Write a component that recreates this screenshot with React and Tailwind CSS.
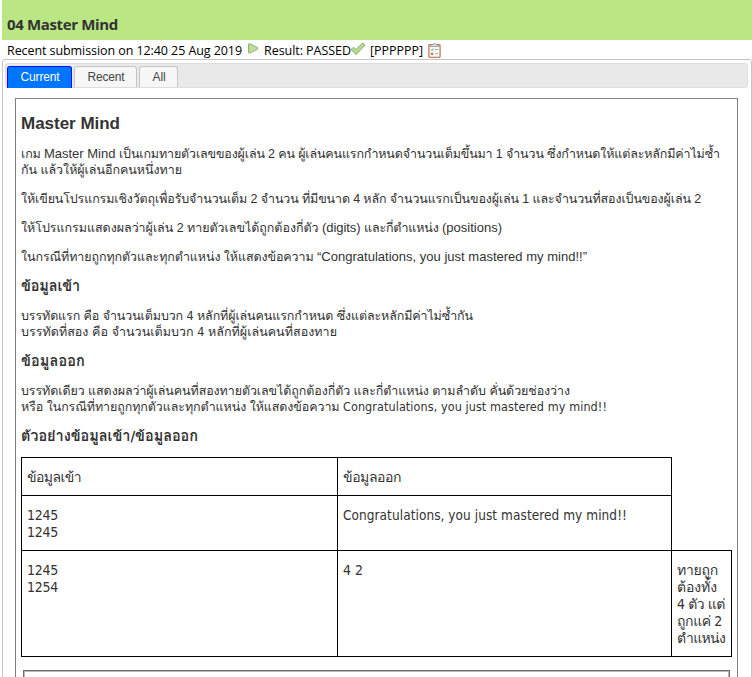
import { useLayoutEffect, useRef, useState } from "react";

const arial = "font-['Liberation_Sans','Loma','Noto_Sans_Thai',sans-serif]";
const tahoma = "font-['DejaVu_Sans_Condensed','Noto_Sans','Loma','Noto_Sans_Thai',sans-serif]";
const trebuchet = "font-['Open_Sans',sans-serif]";

// A run of text whose tracking is adjusted so that it spans `w` pixels.
function Run({ w, className = "", children }) {
  const ref = useRef(null);
  const [tracking, setTracking] = useState(0);
  useLayoutEffect(() => {
    const fit = () => {
      const el = ref.current;
      el.style.letterSpacing = "0px";
      const base = el.getBoundingClientRect().width;
      el.style.letterSpacing = "1px";
      const units = el.getBoundingClientRect().width - base;
      const t = units > 0 ? (w - base) / units : 0;
      el.style.letterSpacing = t + "px";
      setTracking(t);
    };
    fit();
    document.fonts.ready.then(fit);
  }, [w]);
  return (
    <span ref={ref} className={`inline-block whitespace-pre ${className}`} style={{ letterSpacing: tracking }}>
      {children}
    </span>
  );
}

function Line({ runs, className = "h-4 leading-4" }) {
  return (
    <div className={`flex whitespace-pre ${className}`}>
      {runs.map(([text, w, cls], i) => (
        <Run key={i} w={w} className={cls}>{text}</Run>
      ))}
    </div>
  );
}

function PlayIcon() {
  return (
    <svg width="12" height="12" viewBox="0 0 12 12">
      <path d="M1.5 1 L3 .8 L10.5 4.6 L10.5 6.2 L3 10 L1.5 9.8 Z" fill="#c0dd9c" stroke="#8fb070" strokeLinejoin="round" />
    </svg>
  );
}

function CheckIcon() {
  return (
    <svg width="16" height="16" viewBox="0 0 16 16">
      <path d="M1 7.5 L3.5 5.4 L6 7.6 L12.6 1 L15 3 L6.2 12.6 Z" fill="#b9db94" stroke="#86a966" strokeLinejoin="round" />
    </svg>
  );
}

function ClipboardIcon() {
  return (
    <svg width="13" height="15" viewBox="0 0 14 16">
      <rect x="1" y="2" width="12" height="13.2" rx=".5" fill="#fff" stroke="#b8653f" strokeWidth="1.2" />
      <path d="M2.5 3.8 V1.8 H5 Q5 .6 7 .6 Q9 .6 9 1.8 H11.5 V3.8 Z" fill="#ddd" stroke="#858585" strokeWidth=".8" />
      <path d="M3 7 L4.2 8.2 L6 5.7" fill="none" stroke="#5d9b45" />
      <path d="M3 10.3 L5.6 12.9 M5.6 10.3 L3 12.9" stroke="#d0402a" />
      <path d="M7.5 7 H11 M7.5 11.5 H11" stroke="#999" />
    </svg>
  );
}

const cell = "border border-black px-[5px] pt-[11px] align-top";
const latin = "text-[13px]";

export default function App() {
  return (
    <div className={`h-[677px] w-[752px] overflow-hidden bg-white text-[#333] ${arial}`}>
      <header className={`ml-0.5 h-10 bg-[#bbe684] pl-[5px] pt-[13px] text-[15px] font-bold leading-[22px] text-[#333] ${trebuchet}`}>
        <Line className="h-[22px]" runs={[["04 Master Mind", 111]]} />
      </header>

      <div className={`flex h-[19px] whitespace-pre pl-[7px] pt-[2px] text-[12.5px] leading-[18px] text-black ${trebuchet}`}>
        <Run w={235}>Recent submission on 12:40 25 Aug 2019</Run>
        <span className="ml-[5px] pt-[1px]"><PlayIcon /></span>
        <Run w={87} className="ml-[5px]">Result: PASSED</Run>
        <span className="-ml-px"><CheckIcon /></span>
        <Run w={53} className="ml-[4px]">[PPPPPP]</Run>
        <span className="ml-[5px] pt-[1px]"><ClipboardIcon /></span>
      </div>

      <main className="ml-0.5 h-[640px] w-[750px] rounded-[3px] border border-[#c5c5c5] px-0.5 pt-[3px]">
        <nav className="flex h-[25px] w-[743px] gap-0.5 rounded-[3px] border border-[#ddd] bg-[#e9e9e9] pl-px pt-0.5 text-xs">
          <span className="flex h-[22px] w-[65px] justify-center rounded-t-[3px] border border-b-0 border-[#0010ff] bg-[#0075ff] pl-px leading-5 text-white"><Run w={39}>Current</Run></span>
          <span className="flex h-[21px] w-[63px] justify-center rounded-t-[3px] border border-b-0 border-[#c5c5c5] bg-[#f6f6f6] pl-px leading-5 text-[#454545]"><Run w={37}>Recent</Run></span>
          <span className="flex h-[21px] w-[39px] justify-center rounded-t-[3px] border border-b-0 border-[#c5c5c5] bg-[#f6f6f6] pl-px leading-5 text-[#454545]"><Run w={13}>All</Run></span>
        </nav>

        <article className="ml-2.5 mt-2.5 h-[600px] w-[723px] border border-[#808080] pl-[5px] pt-[15px] text-[12.5px]">
          <h1 className="text-[17px] font-bold"><Line className="h-5 leading-5" runs={[["Master Mind", 99]]} /></h1>

          <div className="mt-3">
            <Line runs={[["เกม ", 23], ["Master Mind ", 75, latin], ["เป็นเกมทายตัวเลขของผู้เล่น 2 คน ผู้เล่นคนแรกกำหนดจำนวนเต็มขึ้นมา 1 จำนวน ซึ่งกำหนดให้แต่ละหลักมีค่าไม่ซ้ำ", 601]]} />
            <Line runs={[["กัน แล้วให้ผู้เล่นอีกคนหนึ่งทาย", 161]]} />
          </div>
          <div className="mt-[13px]">
            <Line runs={[["ให้เขียนโปรแกรมเชิงวัตถุเพื่อรับจำนวนเต็ม 2 จำนวน ที่มีขนาด 4 หลัก จำนวนแรกเป็นของผู้เล่น 1 และจำนวนที่สองเป็นของผู้เล่น 2", 680]]} />
          </div>
          <div className="mt-[13px]">
            <Line runs={[["ให้โปรแกรมแสดงผลว่าผู้เล่น 2 ทายตัวเลขได้ถูกต้องกี่ตัว ", 301], ["(digits) ", 42, latin], ["และกี่ตำแหน่ง ", 78], ["(positions)", 60, latin]]} />
          </div>
          <div className="mt-[13px]">
            <Line runs={[["ในกรณีที่ทายถูกทุกตัวและทุกตำแหน่ง ให้แสดงข้อความ ", 296], ["“Congratulations, you just mastered my mind!!”", 270, latin]]} />
          </div>

          <h2 className={`mt-[13px] text-[14.5px] font-bold ${tahoma}`}><Line runs={[["ข้อมูลเข้า", 59]]} /></h2>
          <div className={`mt-[14px] ${tahoma}`}>
            <Line runs={[["บรรทัดแรก คือ จำนวนเต็มบวก 4 หลักที่ผู้เล่นคนแรกกำหนด ซึ่งแต่ละหลักมีค่าไม่ซ้ำกัน", 452]]} />
            <Line runs={[["บรรทัดที่สอง คือ จำนวนเต็มบวก 4 หลักที่ผู้เล่นคนที่สองทาย", 316]]} />
          </div>

          <h2 className={`mt-[13px] text-[14.5px] font-bold ${tahoma}`}><Line runs={[["ข้อมูลออก", 64]]} /></h2>
          <div className={`mt-[14px] ${tahoma}`}>
            <Line runs={[["บรรทัดเดียว แสดงผลว่าผู้เล่นคนที่สองทายตัวเลขได้ถูกต้องกี่ตัว และกี่ตำแหน่ง ตามลำดับ คั่นด้วยช่องว่าง", 549]]} />
            <Line runs={[["หรือ ในกรณีที่ทายถูกทุกตัวและทุกตำแหน่ง ให้แสดงข้อความ ", 322], ["Congratulations, you just mastered my mind!!", 264]]} />
          </div>

          <h2 className={`mt-[13px] text-[14.5px] font-bold ${tahoma}`}><Line runs={[["ตัวอย่างข้อมูลเข้า/ข้อมูลออก", 177]]} /></h2>

          <table className={`mt-[13px] w-[711px] table-fixed border-collapse text-sm leading-[17px] ${tahoma}`}>
            <colgroup><col className="w-[316px]" /><col className="w-[334px]" /><col className="w-[60px]" /></colgroup>
            <tbody>
              <tr className="h-[38px]">
                <td className={cell}><Line className="h-[17px]" runs={[["ข้อมูลเข้า", 54]]} /></td>
                <td className={cell}><Line className="h-[17px]" runs={[["ข้อมูลออก", 58]]} /></td>
              </tr>
              <tr className="h-[55px]">
                <td className={cell}>
                  <Line className="h-[17px]" runs={[["1245", 31]]} />
                  <Line className="h-[17px]" runs={[["1245", 31]]} />
                </td>
                <td className={cell}><Line className="h-[17px] text-[13.5px]" runs={[["Congratulations, you just mastered my mind!!", 284]]} /></td>
              </tr>
              <tr className="h-[106px]">
                <td className={cell}>
                  <Line className="h-[17px]" runs={[["1245", 31]]} />
                  <Line className="h-[17px]" runs={[["1254", 31]]} />
                </td>
                <td className={cell}><Line className="h-[17px]" runs={[["4 2", 20]]} /></td>
                <td className={cell}>
                  <Line className="h-[17px]" runs={[["ทายถูก", 41]]} />
                  <Line className="h-[17px]" runs={[["ต้องทั้ง", 40]]} />
                  <Line className="h-[17px]" runs={[["4 ตัว แต่", 48]]} />
                  <Line className="h-[17px]" runs={[["ถูกแค่ 2", 45]]} />
                  <Line className="h-[17px]" runs={[["ตำแหน่ง", 48]]} />
                </td>
              </tr>
            </tbody>
          </table>

          <div className="ml-[2px] mt-[13px] h-10 w-[707px] border border-[#6d6d6d] p-0 shadow-[inset_0_0_0_1px_#b8b8b8]" />
        </article>
      </main>
    </div>
  );
}
